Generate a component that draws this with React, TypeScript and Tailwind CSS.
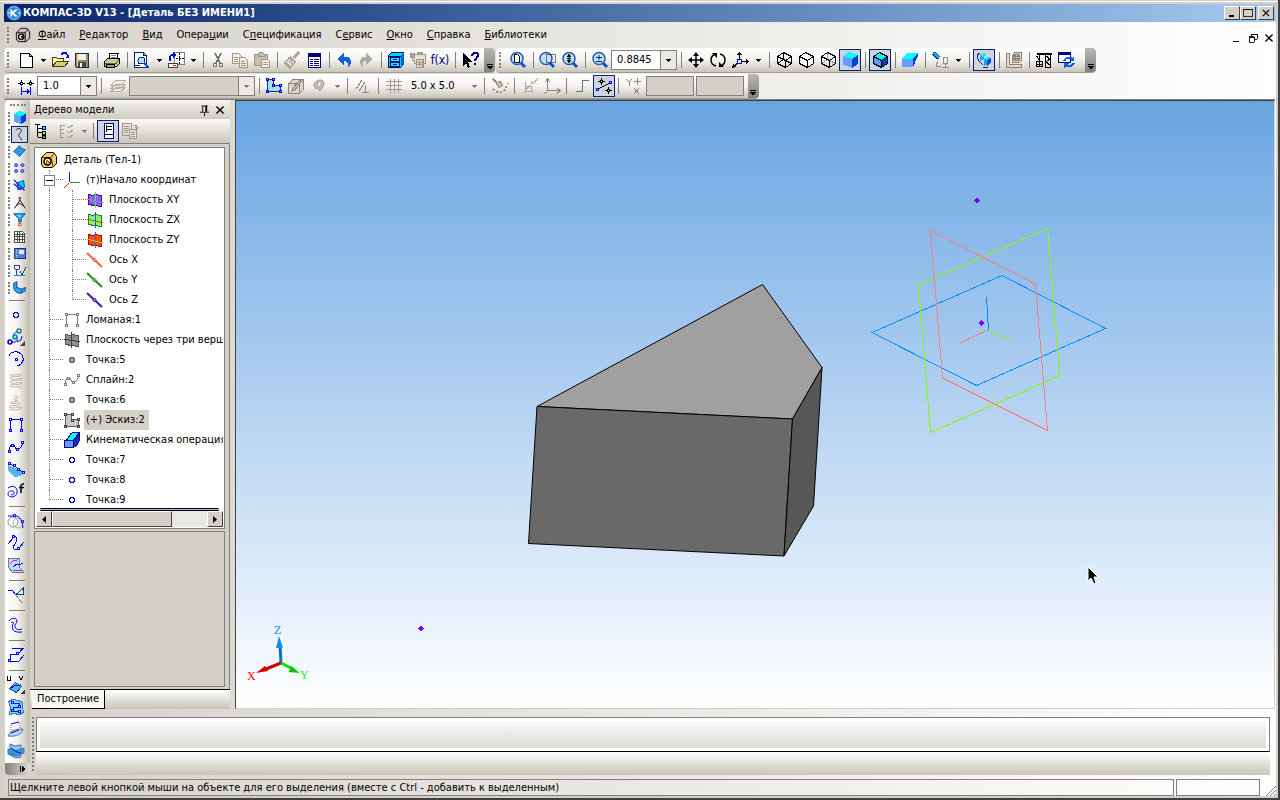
import React, { useState } from 'react';
import clsx from 'clsx';

const ICONS: Record<string, React.ReactNode> = {
  logo: (
    <g shapeRendering="auto">
      <circle cx="9" cy="9" r="8.5" fill="#2b7fd0" />
      <circle cx="9" cy="9" r="7" fill="none" stroke="#9fd0f5" strokeWidth="1" />
      <path d="M6 5v8M7 9l5-4M7 9l5 4" stroke="#fff" strokeWidth="2" fill="none" />
      <path d="M13 9h3M2 9h3" stroke="#fff" />
    </g>
  ),
  nut: (
    <g shapeRendering="auto">
      <path d="M1.5 6.5l5-5h7l3 4v7l-4 4h-9l-2-3z" fill="#c8c4bc" stroke="#000" />
      <path d="M2 6.5h9.5v10M11.5 6.5l3-4" stroke="#000" fill="none" />
      <circle cx="7" cy="11" r="3" fill="#fff" stroke="#000" strokeWidth="1.5" />
      <path d="M6 11l3-2v4z" />
    </g>
  ),
  nutGold: (
    <g shapeRendering="auto">
      <path d="M1.5 6.5l5-5h7l3 4v7l-4 4h-9l-2-3z" fill="#ffc864" stroke="#000" />
      <path d="M2 6.5h9l2 9M11 6.5l3-4" stroke="#603c00" fill="none" />
      <circle cx="7.5" cy="10.5" r="3.5" fill="#fff" stroke="#000" strokeWidth="1.5" />
      <path d="M7 9l3 3H6z" fill="#ffc864" stroke="#805000" />
    </g>
  ),
  new: <path d="M3.5 2.5h9l3 3v11h-12zM12.5 2.5v3h3" fill="#fff" stroke="#000" />,
  open: (
    <g>
      <path d="M1.5 15.5v-9h4l1 1h6v3" fill="#ffffb0" stroke="#404000" />
      <path d="M1.5 15.5l4-5h12l-4 5z" fill="#d8d070" stroke="#404000" />
      <path d="M10 4l2-2h3l2 3" fill="none" stroke="#0000ff" strokeWidth="1.5" />
      <path d="M18 3v4h-4z" fill="#0000ff" />
    </g>
  ),
  save: (
    <g>
      <path d="M2.5 2.5h13v14h-12l-1-1z" fill="#a08c50" stroke="#203050" />
      <path d="M5 3h8v6H5z" fill="#f0f0f0" />
      <path d="M5 11h8v5H5z" fill="#404858" />
      <path d="M7 12h2v4H7z" fill="#fff" />
      <path d="M4 3v12" stroke="#ffd080" />
    </g>
  ),
  print: (
    <g>
      <path d="M6 8l1-5.5h8L14 8z" fill="#fff" stroke="#000" />
      <path d="M8 4.5h5M8 6.5h5" stroke="#888" />
      <path d="M1.5 10.5l3-3h12v5l-3 3h-12z" fill="#c8c8a8" stroke="#000" />
      <path d="M2 12.5h11l3-4" stroke="#606040" fill="none" />
      <path d="M3.5 13.5h8v3h-8z" fill="#a0a078" stroke="#000" />
      <path d="M10 11.5h2" stroke="#ff0" />
    </g>
  ),
  preview: (
    <g>
      <path d="M1.5 1.5h9l3 3v12h-12zM10.5 1.5v3h3" fill="#fff" stroke="#0a246a" />
      <circle cx="8.5" cy="9.5" r="3.5" fill="#b8e0ff" stroke="#0a246a" />
      <path d="M11 12l5 5" stroke="#0a50d0" strokeWidth="2.5" />
      <path d="M2 14h5" stroke="#0a246a" />
    </g>
  ),
  pages: (
    <g>
      <path d="M7.5 1.5h10v12h-10z" fill="#fff" stroke="#808080" />
      <path d="M12.5 2v11M9 7.5h8" stroke="#000" strokeDasharray="2 1" />
      <path d="M1.5 12.5h9v4h-9z" fill="#fff" stroke="#404040" />
      <path d="M6 14.5h3" stroke="#f00" />
      <path d="M2.5 10V6l2-2h2" fill="none" stroke="#0000ff" strokeWidth="2" />
      <path d="M6 1l4 3-4 3z" fill="#0000ff" />
    </g>
  ),
  cut: (
    <g fill="none" stroke="#80786c">
      <path d="M6 2l5 10M12 2L7 12" strokeWidth="1.5" />
      <circle cx="6" cy="14" r="2" />
      <circle cx="12" cy="14" r="2" />
    </g>
  ),
  copy: (
    <g fill="#f0ede6" stroke="#a09484">
      <path d="M1.5 2.5h6l3 3v7h-9z" />
      <path d="M8.5 6.5h5l3 3v7h-8z" />
      <path d="M3 6.5h4M3 8.5h4M3 10.5h4M10 10.5h4M10 12.5h5M10 14.5h5" />
    </g>
  ),
  paste: (
    <g fill="#c8beb0" stroke="#a09484">
      <path d="M1.5 3.5h13v11h-13z" />
      <path d="M5 5V3l2-2h2l2 2v2z" />
      <path d="M8.5 8.5h6l2 2v6h-8z" fill="#f0ede6" />
      <path d="M10 11.5h4M10 13.5h5" />
    </g>
  ),
  brush: (
    <g fill="none" stroke="#b0a498">
      <path d="M16 1l-5 6" strokeWidth="3" />
      <path d="M7 6l6 5M6 7L2 12l5 5 5-6z" fill="#e4ddd0" strokeWidth="1.5" />
      <path d="M4 12l3 3M6 10l4 3" />
    </g>
  ),
  props: (
    <g>
      <path d="M3.5 3.5h12v13h-12z" fill="#fff" stroke="#000080" />
      <path d="M3 2h13v4H3z" fill="#000080" />
      <path d="M5 8.5h3M5 10.5h3M5 12.5h3M5 14.5h3M9 8.5h5M9 10.5h5M9 12.5h5M9 14.5h5" stroke="#000080" />
    </g>
  ),
  undo: <path d="M2 8l7-6v4h3c3 0 4 3 4 5s-1 4-3 5c1-3 0-6-4-6v4z" fill="#1060f0" />,
  redo: <path d="M16 8L9 2v4H7c-3 0-4 3-4 5s1 4 3 5c-1-3 0-6 3-6v4z" fill="#b0aaa4" />,
  cabinet: (
    <g>
      <path d="M1.5 4.5l3-3h12v12l-3 3h-12z" fill="#00d8e8" stroke="#000080" />
      <path d="M14 4v12l3-3V2z" fill="#0060e0" />
      <path d="M2 5h12M3.5 6.5h9v4h-9zM3.5 11.5h9v4h-9z" fill="#00ffff" stroke="#000080" />
      <path d="M6 8.5h4M6 13.5h4" stroke="#000080" />
    </g>
  ),
  scroll: (
    <g fill="#e8e2d8" stroke="#a09484">
      <path d="M5.5 3.5h11v9h-11z" />
      <path d="M1.5 2.5h4v4h-4zM8 3V1h5v2" fill="#b0a494" />
      <path d="M7.5 8.5h7v8h-7zM8 11h7M8 13h7M10 9v7M13 9v7M3 6v3h3" />
    </g>
  ),
  help: (
    <g>
      <path d="M2 2v13l3-3 2 5 2-1-2-5h4z" fill="#000" />
      <path d="M11 5c0-4 6-4 6-1s-3 3-3 6" fill="none" stroke="#000080" strokeWidth="2" />
      <path d="M13 12h2v2h-2z" fill="#000080" />
    </g>
  ),
  zoomDoc: (
    <g shapeRendering="auto">
      <circle cx="8" cy="7.5" r="6" fill="#c0e4ff" stroke="#2858a8" strokeWidth="1.5" />
      <path d="M5.5 3.5h3l2 2v6h-5z" fill="#fff" stroke="#000" />
      <path d="M12 12l4 4" stroke="#1050c0" strokeWidth="3" />
    </g>
  ),
  zoomArea: (
    <g shapeRendering="auto">
      <circle cx="7" cy="7.5" r="6" fill="#c0e4ff" stroke="#2858a8" strokeWidth="1.5" />
      <path d="M7.5 3.5h9v8h-9z" fill="none" stroke="#000" strokeDasharray="1 1" />
      <path d="M11 12l4 4" stroke="#1050c0" strokeWidth="3" />
    </g>
  ),
  zoomDyn: (
    <g shapeRendering="auto">
      <circle cx="8" cy="7.5" r="6" fill="#c0e4ff" stroke="#2858a8" strokeWidth="1.5" />
      <path d="M8 3v9M6 7.5h4" stroke="#000" />
      <path d="M5.5 6h5L8 3zM5.5 9h5L8 12z" fill="#000" />
      <path d="M12 12l4 4" stroke="#1050c0" strokeWidth="3" />
    </g>
  ),
  zoomPm: (
    <g shapeRendering="auto">
      <circle cx="8" cy="7.5" r="6" fill="#c0e4ff" stroke="#2858a8" strokeWidth="1.5" />
      <path d="M5 6.5h6M8 4v5M5 10.5h6" stroke="#0a246a" />
      <path d="M12 12l4 4" stroke="#1050c0" strokeWidth="3" />
    </g>
  ),
  move: (
    <g shapeRendering="auto">
      <path d="M9 3v12M3 9h12" stroke="#000" strokeWidth="1.5" />
      <path d="M9 1l3 4H6zM9 17l3-4H6zM1 9l4-3v6zM17 9l-4-3v6z" />
    </g>
  ),
  rotate: (
    <g shapeRendering="auto">
      <path d="M7 15C3 14 2 11 2 9c0-3 2-5 4-6M11 3c4 1 5 4 5 6 0 3-2 5-4 6" fill="none" stroke="#000" strokeWidth="1.5" />
      <path d="M3 2h5v5zM15 16h-5v-5z" />
    </g>
  ),
  axes: (
    <g>
      <path d="M8.5 2v9M8 10.5h9M8 11l-6 5" stroke="#000" fill="none" />
      <path d="M8.5 1l2.5 3H6zM18 10.5l-3-2.5v5zM1 17l1-4 3 3z" />
      <path d="M6.5 8.5h4v4h-4z" fill="#fff" stroke="#0000ff" />
    </g>
  ),
  cubeWire: <path d="M2.5 5.5l6-4 8 4v7l-6 4-8-4zM2.5 5.5l8 4v7M10.5 9.5l6-4M8.5 1.5v7l-6 4M8.5 8.5l8 4" fill="none" stroke="#000" />,
  cubeHidden: <path d="M2.5 5.5l6-4 8 4v7l-6 4-8-4zM2.5 5.5l8 4v7M10.5 9.5l6-4" fill="#fff" stroke="#000" />,
  cubeThin: (
    <g fill="none" stroke="#000">
      <path d="M8.5 1.5v7l-6 4M8.5 8.5l8 4" stroke="#a0a0a0" />
      <path d="M2.5 5.5l6-4 8 4v7l-6 4-8-4zM2.5 5.5l8 4v7M10.5 9.5l6-4" />
    </g>
  ),
  cubeBlue: (
    <g>
      <path d="M2 5l6-4 9 3-6 5z" fill="#00ffff" />
      <path d="M2 5l9 3v9l-9-3z" fill="#60a0ff" />
      <path d="M11 8l6-4v9l-6 4z" fill="#0040e0" />
    </g>
  ),
  cubeEdge: (
    <g stroke="#000">
      <path d="M2.5 5.5l6-4 8 4-6 4z" fill="#00ffff" />
      <path d="M2.5 5.5l8 4v7l-8-4z" fill="#60a0ff" />
      <path d="M10.5 9.5l6-4v7l-6 4z" fill="#0040c0" />
    </g>
  ),
  wedge: (
    <g>
      <path d="M1 8l5-6h12l-6 6z" fill="#00ffff" />
      <path d="M1 8h11v8H1z" fill="#60a0ff" />
      <path d="M12 8l5-6v3l-5 11z" fill="#0040e0" />
    </g>
  ),
  light: (
    <g>
      <path d="M2 2l6 5" stroke="#0030a0" strokeWidth="4" />
      <path d="M3 2l5 5" stroke="#00c0ff" strokeWidth="2" />
      <path d="M12.5 6.5h4v6h-4zM14.5 12v5M11 16.5h7M7 10l-2 5M5 16l5-1" fill="none" stroke="#909090" />
    </g>
  ),
  section: (
    <g>
      <path d="M5 4l4-2v6l-4 2zM9 8l6-2v6l-6 3z" fill="#20a0f0" />
      <path d="M5 4l4-2 3 2-4 2zM9 8l3-2 4 1-4 2z" fill="#00f0ff" />
      <path d="M12 9l4-2v5l-4 3z" fill="#0050d0" />
      <path d="M2 4c0 4 2 7 6 10M8 16h5M2 4l3-2" fill="none" stroke="#0a246a" />
    </g>
  ),
  caliper: (
    <g fill="none" stroke="#908478">
      <path d="M1.5 2.5h3v11h12v3h-15z" fill="#e0d8cc" />
      <path d="M7.5 4.5l2-3h7v8l-2 2h-7z" fill="#d8cec0" />
      <circle cx="11.5" cy="6.5" r="3" strokeWidth="1.5" />
      <circle cx="11.5" cy="6.5" r="1" />
    </g>
  ),
  tower: (
    <g>
      <path d="M2 2.5h15" stroke="#000" strokeWidth="2" />
      <path d="M4.5 2v8M4.5 9l-3-4" stroke="#000" fill="none" />
      <path d="M1.5 10.5h6v5h-6zM4.5 10v6M1 13h7" fill="none" stroke="#000" />
      <path d="M10.5 3v13.5h5V3M11 5l4 3-4 3 4 3" fill="none" stroke="#000" />
    </g>
  ),
  refresh: (
    <g>
      <path d="M1.5 2.5h12v9h-12z" fill="#fff" stroke="#000080" />
      <path d="M1 1h13v3H1z" fill="#000080" />
      <path d="M7 10c2-4 6-4 8-2M17 12c-2 4-6 4-8 2" fill="none" stroke="#1060f0" strokeWidth="2" />
      <path d="M17 5v5h-5zM7 17v-5h5z" fill="#1060f0" />
    </g>
  ),
  step: (
    <g>
      <path d="M4.5 3v6M1 6h7M13.5 3v6M10 6h7" stroke="#000" />
      <path d="M3.5 5.5h2v2h-2zM12.5 5.5h2v2h-2z" fill="#fff" stroke="#000" />
      <path d="M4.5 10v8M13.5 10v8M5 14.5h8" stroke="#0000ff" />
      <path d="M13 14.5l-3-2.5v5z" fill="#0000ff" />
    </g>
  ),
  layers: <path d="M1.5 14.5l5-4h10l-5 4zM1.5 11.5l5-4h10l-5 4zM1.5 8.5l5-5h10l-5 5z" fill="#eee8e0" stroke="#b8aca0" />,
  sketch: (
    <g>
      <path d="M2.5 2.5h6v6h7v6h-13z" fill="#a8dcec" stroke="#0a3a9a" />
      <path d="M1 1h3v3H1zM7 1h3v3H7zM7 7h3v3H7zM14 7h3v3h-3zM14 13h3v3h-3zM1 13h3v3H1z" fill="#0000c0" />
      <path d="M2 2h1v1H2zM8 2h1v1H8zM8 8h1v1H8zM15 8h1v1h-1zM15 14h1v1h-1zM2 14h1v1H2z" fill="#00e0ff" />
    </g>
  ),
  sketchBox: (
    <g fill="#ddd6cc" stroke="#908478">
      <path d="M1.5 6.5l4-4h11v10l-4 4h-11zM1.5 6.5h11v10M12.5 6.5l4-4" />
      <path d="M13 3L6 11l-1 3 3-1 6-8z" fill="#c0b8ac" />
    </g>
  ),
  magnet: (
    <g shapeRendering="auto" fill="none">
      <path d="M5 12L3 9c-1-4 6-8 9-5 2 3 0 6-3 10l-2-2c3-4 4-6 3-7S5 6 7 9l0 1z" fill="#c8c0b8" stroke="#a09890" />
    </g>
  ),
  parallel: <path d="M3 12L9 3M6 14l6-9M9 15.5h7M12.5 8v7" fill="none" stroke="#908880" />,
  grid: <path d="M5.5 2v14M9.5 2v14M13.5 2v14M1 4.5h16M1 8.5h16M1 12.5h16" stroke="#a09890" />,
  rough: (
    <g stroke="#a09080">
      <path d="M2 2l4 4" strokeWidth="2" />
      <path d="M5 6l4-2 3 4-4 3z" fill="#c8bcb0" />
      <path d="M2 12l6 4 6-3 3-7" fill="none" strokeWidth="2" strokeDasharray="2 2" />
    </g>
  ),
  snap: <path d="M4.5 5v9h8M4 14l6-7M2 17l3-3M10 4l2 3 5-6M5 9h5v5" fill="none" stroke="#b0a8a0" />,
  ortho: <path d="M4.5 3v10.5h12M4 14l-3 3M2 5l2.5-3L7 5M14 11l3 2.5-3 3" fill="none" stroke="#908478" />,
  stair: <path d="M3 14.5h6.5v-11H16" fill="none" stroke="#707070" />,
  trace: (
    <g>
      <path d="M3 12l12-6" stroke="#000" />
      <path d="M6.5 1v7M3 4.5h7M13.5 10v7M10 13.5h7" stroke="#000" />
      <path d="M5.5 3.5h2v2h-2zM12.5 12.5h2v2h-2z" fill="#fff" stroke="#000" />
      <path d="M1.5 11.5h2v2h-2zM14.5 4.5h2v2h-2z" fill="#fff" stroke="#00f" />
    </g>
  ),
  xy: <path d="M1 2l3 3 3-3M4 5v4M12.5 1v7M9 4.5h7M9 11l5 6M14 11l-5 6" fill="none" stroke="#908880" />,
  // left bar, group icons
  curve: <path d="M5 4c1-3 6-3 6 0 0 4-5 5-2 8 2 2 3 3 2 4" fill="none" stroke="#000" shapeRendering="auto" />,
  surf: <path d="M2 9l7-7 2 3 5 2-7 8-3-3z" fill="#3098e8" stroke="#0050a0" shapeRendering="auto" />,
  dots: (
    <g fill="#80a0ff" stroke="#1020e0" shapeRendering="auto">
      <circle cx="5" cy="5" r="1.8" />
      <circle cx="12.5" cy="5" r="1.8" />
      <circle cx="5" cy="12" r="1.8" />
      <circle cx="12.5" cy="12" r="1.8" />
    </g>
  ),
  axisSurf: (
    <g shapeRendering="auto">
      <path d="M6 6l8-3 1 8-8 3z" fill="#00d8f0" stroke="#0020d0" />
      <path d="M2 2l13 13M2 7l9 7" stroke="#0020d0" strokeWidth="1.5" />
    </g>
  ),
  compass: <path d="M8 3.5h3M9.5 3v3L3 16M9.5 6L16 16M5 13l4-3 5 3" fill="none" stroke="#000" shapeRendering="auto" />,
  filter: (
    <g shapeRendering="auto">
      <path d="M2 2h14l-5 6v4H8V8z" fill="#20a0f0" stroke="#0050a0" />
      <path d="M6 4h4v3z" fill="#b0f0ff" />
      <path d="M8 13.5h3v3H8z" fill="#fff" stroke="#e02000" />
    </g>
  ),
  sheet: <path d="M3.5 2.5h8l4 4v10h-12zM6.5 3v13M9.5 3v13M12.5 5v11M4 6.5h11M4 9.5h11M4 12.5h11" fill="#fff" stroke="#303030" />,
  book: (
    <g>
      <path d="M3.5 2.5h13v13h-13z" fill="#5080e0" stroke="#0a246a" />
      <path d="M8 5h6v5H8z" fill="#e0f0ff" />
      <path d="M5 3v12" stroke="#fff" strokeDasharray="1 1" />
    </g>
  ),
  base: (
    <g fill="none">
      <path d="M3.5 2.5h5v5h-5zM5.5 8v6M10 10l2 4 5-9" stroke="#0a246a" />
      <path d="M2 15h14" stroke="#0090e0" strokeWidth="2" />
    </g>
  ),
  angle: <path d="M2 4l4-2v7l6 2 4-2v4l-5 3c-5 0-9-3-9-7zM6 9l-2 1M12 11l-1 4" fill="#20b0f0" stroke="#00309a" shapeRendering="auto" />,
  // construction commands
  point: (
    <g>
      <path d="M7 6h4v1h1v4h-1v1H7v-1H6V7h1z" fill="#0000ff" />
      <path d="M8 7h2v1h1v2h-1v1H8v-1H7V8h1z" fill="#ffff60" />
    </g>
  ),
  pointGray: (
    <g>
      <path d="M7 6h4v1h1v4h-1v1H7v-1H6V7h1z" fill="#707070" />
      <path d="M8 8h2v2H8z" fill="#d0d0d0" />
    </g>
  ),
  pointCurve: (
    <g shapeRendering="auto">
      <path d="M3 14c7 1 9-2 6-5S6 5 12 3M15 8l-1 4-4 2" fill="none" stroke="#0000ff" />
      <circle cx="12" cy="3" r="2" fill="#ff0" stroke="#0080c0" strokeWidth="1.5" />
      <circle cx="8" cy="9" r="2" fill="#8f8" stroke="#0080c0" strokeWidth="1.5" />
      <circle cx="3" cy="14" r="2" fill="#ff0" stroke="#0000ff" strokeWidth="1.5" />
      <path d="M18 13v5h-5z" fill="#404040" />
    </g>
  ),
  arc: (
    <g fill="none" stroke="#0000ff">
      <path d="M2 6c2-5 9-6 13-1 3 5 0 10-5 11" />
      <path d="M8.5 8.5h2v2h-2z" />
    </g>
  ),
  spring: (
    <g fill="none" stroke="#c0b4ac" shapeRendering="auto">
      <path d="M2 2c3 3 9-1 13 1-3 3-11 0-12 3 3 3 9-1 12 1-3 3-11 0-12 3 3 3 9-1 12 1-3 3-11 0-12 3 3 2 9-1 12 2" />
    </g>
  ),
  springCone: (
    <g fill="none" stroke="#c0b4ac" shapeRendering="auto">
      <path d="M7 2c3-1 5 1 3 2-4 0-5 3 1 2-1 3-8 1-7 3 3 2 7-2 9 1-2 3-10 0-11 3 3 3 10-2 13 1-4 3-10 1-13 2" />
    </g>
  ),
  polyline: (
    <g fill="#fff" stroke="#0000ff">
      <path d="M3.5 15V3.5h11V15" fill="none" />
      <path d="M2.5 2.5h2v2h-2zM13.5 2.5h2v2h-2zM2.5 13.5h2v2h-2zM13.5 13.5h2v2h-2z" />
    </g>
  ),
  polylineGray: (
    <g fill="#fff" stroke="#808080">
      <path d="M3.5 15V3.5h11V15" fill="none" />
      <path d="M2.5 2.5h2v2h-2zM13.5 2.5h2v2h-2zM2.5 13.5h2v2h-2zM13.5 13.5h2v2h-2z" />
    </g>
  ),
  spline: (
    <g fill="#fff" stroke="#0000ff">
      <path d="M2 14c1-8 4-9 6-5s6 3 8-5" fill="none" />
      <path d="M1.5 12.5h2v2h-2zM4.5 6.5h2v2h-2zM9.5 10.5h2v2h-2zM14.5 3.5h2v2h-2z" />
    </g>
  ),
  splineGray: (
    <g fill="#fff" stroke="#808080">
      <path d="M2 14c1-8 4-9 6-5s6 3 8-5" fill="none" />
      <path d="M1.5 12.5h2v2h-2zM4.5 6.5h2v2h-2zM9.5 10.5h2v2h-2zM14.5 3.5h2v2h-2z" />
    </g>
  ),
  splineSurf: (
    <g fill="#fff" stroke="#0000ff">
      <path d="M1 5l16 7-4 4-5 1-7-6z" fill="#50b8f0" stroke="none" />
      <path d="M2 3l5 3 5 3 4 4" fill="none" />
      <path d="M1.5 2.5h2v2h-2zM6.5 4.5h2v2h-2zM10.5 8.5h2v2h-2zM15.5 11.5h2v2h-2z" />
    </g>
  ),
  spiral: (
    <g fill="none" shapeRendering="auto">
      <path d="M1 6c6-4 10 0 9 5s-9 5-9 1 6-4 6-1-3 2-3 1" stroke="#0000ff" />
      <path d="M14 11V4c0-2 1-2 3-2M12 5.5h5" stroke="#000" strokeWidth="1.5" />
    </g>
  ),
  fillet: (
    <g fill="none" shapeRendering="auto">
      <circle cx="6" cy="10" r="5" stroke="#909090" />
      <circle cx="11" cy="11" r="5" stroke="#b0b0b0" />
      <path d="M1 4h6c4-1 8 2 9 12" stroke="#0000ff" />
      <path d="M6.5 2.5h2v2h-2zM14.5 8.5h2v2h-2z" stroke="#0000ff" fill="#fff" />
    </g>
  ),
  connect: (
    <g fill="none" stroke="#0000ff">
      <path d="M1 10l5-6c4-4 5 2 2 6s-1 8 4 4l5-6" />
      <path d="M5.5 1.5h2v2h-2zM10.5 13.5h2v2h-2z" fill="#fff" />
    </g>
  ),
  project: (
    <g fill="none">
      <path d="M1.5 2.5h11v9l4 4v1h-11l-4-5z" fill="#b0e4f4" stroke="#708088" />
      <path d="M3 8l4-4 2 1 2-2M6 14h9" stroke="#ff00ff" />
      <path d="M6 11l4-3 2 1 4-2" stroke="#0000ff" />
    </g>
  ),
  trim: (
    <g fill="none">
      <path d="M1 4h4l4 5" stroke="#0000ff" />
      <path d="M9 9l5 7h2" stroke="#909090" />
      <path d="M9 8.5l7-6v6z" stroke="#0a4080" fill="#e0f8ff" />
    </g>
  ),
  offset: (
    <g fill="none" stroke="#0000e0" shapeRendering="auto">
      <path d="M2 5c3-4 8-3 8 0s-3 3-2 6 4 3 7 2" />
      <path d="M4 7c2-2 3-1 2 1-2 5 0 9 9 8" />
    </g>
  ),
  bound: (
    <g fill="none" stroke="#0000ff">
      <path d="M5 2.5h11L11 8H3v7h9l5-6" />
      <path d="M9.5 6.5h2v2h-2zM1.5 13.5h2v2h-2z" fill="#fff" />
    </g>
  ),
  uv: (
    <g>
      <path d="M2.5 12.5l6-6 6 4-5 6z" fill="#60b0f0" stroke="#0050a0" />
      <path d="M4 12l5-3 3 1 2-2" stroke="#0000ff" fill="none" />
      <path d="M0.5 0v4h3V0M12 0l2 4 2-4" fill="none" stroke="#000" />
      <path d="M18 13v5h-5z" fill="#404040" />
    </g>
  ),
  patch: (
    <g fill="#fff" stroke="#0000ff">
      <path d="M1.5 3.5l4-2 6 1 4 2v5l1 5-4 2-6-1-4 1 1-7z" fill="#80d8f8" stroke="#3080a0" />
      <path d="M6 5h6v4H6v4h6" fill="none" />
      <path d="M4.5 3.5h2v2h-2zM11.5 7.5h2v2h-2zM4.5 11.5h2v2h-2zM11.5 12.5h2v2h-2z" />
    </g>
  ),
  ruled: (
    <g shapeRendering="auto">
      <path d="M1 16c2-5 7-7 15-7-1 5-6 8-15 7z" fill="#b0d8ff" stroke="#607080" />
      <path d="M4 4l8-2M4 13l8-3" stroke="#0000ff" />
      <path d="M4 5v7M13 3v6" stroke="#808080" strokeDasharray="1 1" />
    </g>
  ),
  cross: (
    <g shapeRendering="auto">
      <path d="M3 2l5 2 6-1v12l-5 1-6-3z" fill="#80ccf4" stroke="#507090" />
      <path d="M1 7l7 2 9-3v5l-7 3-9-2z" fill="#3098e8" stroke="#507090" />
      <path d="M4 6l6 4 4 1" stroke="#0000ff" fill="none" />
    </g>
  ),
  // tree
  origin: (
    <g fill="none">
      <path d="M6.5 1v10" stroke="#2020d0" />
      <path d="M7 11.5h10" stroke="#209040" />
      <path d="M6 12l-5 5" stroke="#e02020" />
    </g>
  ),
  planeXY: (
    <g>
      <path d="M2.5 3.5l5 1 1-1 7 1v11l-7-1-6-1z" fill="#7070ff" stroke="#5000a0" />
      <path d="M9 1v16" stroke="#60e060" />
      <path d="M1 8l16 4" stroke="#ff6060" />
    </g>
  ),
  planeZX: (
    <g>
      <path d="M2.5 3.5l5 1 1-1 7 1v11l-7-1-6-1z" fill="#70ff70" stroke="#208020" />
      <path d="M9 1v16" stroke="#4040ff" />
      <path d="M1 8l16 4" stroke="#ff4000" />
    </g>
  ),
  planeZY: (
    <g>
      <path d="M2.5 3.5l5 1 1-1 7 1v11l-7-1-6-1z" fill="#ff5000" stroke="#c00000" />
      <path d="M9 1v16" stroke="#4060ff" />
      <path d="M1 8l16 4" stroke="#80e060" />
    </g>
  ),
  planeGray: (
    <g>
      <path d="M2.5 3.5l5 1 1-1 7 1v11l-7-1-6-1z" fill="#909090" stroke="#505050" />
      <path d="M8.5 1v16M1 8l16 3" stroke="#404040" />
    </g>
  ),
  axisX: (
    <g shapeRendering="auto" stroke="#ff6030">
      <path d="M1 2l15 14" strokeWidth="2" />
      <circle cx="8.5" cy="9" r="1.5" fill="#ffb090" />
    </g>
  ),
  axisY: (
    <g shapeRendering="auto" stroke="#209020">
      <path d="M1 2l15 14" strokeWidth="2" />
      <circle cx="8.5" cy="9" r="1.5" fill="#90d090" />
    </g>
  ),
  axisZ: (
    <g shapeRendering="auto" stroke="#5010b0">
      <path d="M1 2l15 14" strokeWidth="2" />
      <circle cx="8.5" cy="9" r="1.5" fill="#a080e0" />
    </g>
  ),
  sketchGray: (
    <g>
      <path d="M2.5 3.5h6v5h7v7h-13z" fill="#c8c8c8" stroke="#606060" />
      <path d="M1 2h3v3H1zM8 2h3v3H8zM8 8h3v3H8zM14 7h3v3h-3zM14 14h3v3h-3zM1 14h3v3H1z" fill="#404040" />
      <path d="M2 3h1v1H2zM9 3h1v1H9zM9 9h1v1H9zM15 8h1v1h-1zM15 15h1v1h-1zM2 15h1v1H2z" fill="#c0c0c0" />
    </g>
  ),
  sweep: (
    <g stroke="#000080">
      <path d="M1.5 9.5c5 0 4-7 8-8h7c-3 1-3 7-7 8z" fill="#00ffff" />
      <path d="M10 10c4-1 4-7 6.5-8v7c-1 4-4 7-6.5 7z" fill="#0030e0" />
      <path d="M1.5 9.5h9v7h-9z" fill="#60a0ff" />
    </g>
  ),
  treeView: (
    <g fill="none" stroke="#000">
      <path d="M3.5 2v13M4 6h4M4 10.5h4M4 15h4M1 2.5h5" />
      <path d="M8.5 4.5h3v3h-3z" fill="#0ff" stroke="#000080" />
      <path d="M8.5 9.5h3v3h-3z" fill="#ff0" />
      <path d="M8.5 13.5h3v3h-3z" fill="#0c0" />
    </g>
  ),
  treeList: <path d="M2.5 3v12M2 3.5h5M2 7.5h4M2 11.5h4M2 15.5h4M9 4l2 2 4-3M9 9l2 2 4-3M9 14l2 2 4-3" fill="none" stroke="#a09890" />,
  docTree: (
    <g fill="none" stroke="#000080">
      <path d="M5.5 1.5h9v15h-9z" fill="#fff" />
      <path d="M7.5 3v7M8 4.5h5M8 7.5h5" stroke="#000" />
      <path d="M6 12.5h8" />
    </g>
  ),
  docCopy: (
    <g fill="#e4ded4" stroke="#a09484">
      <path d="M1.5 1.5h9v12h-9z" />
      <path d="M8.5 7.5h7v9h-7zM12 3c4 0 4 1 4 3M14 5l2 2 2-2" />
      <path d="M3 4.5h5M3 6.5h5M3 8.5h4M3 10.5h4M10 10.5h4M10 12.5h4M10 14.5h4" />
    </g>
  ),
  pin: (
    <g fill="none" stroke="#000" shapeRendering="auto">
      <path d="M6 4.5h7M7.5 5v6M4.5 11.5h10M9.5 12v4" />
      <path d="M11.5 4v7" strokeWidth="2" />
    </g>
  ),
  close: <path d="M5 5l8 8M13 5l-8 8" stroke="#000" strokeWidth="1.5" shapeRendering="auto" />,
  minimize: <path d="M5 13h6" stroke="#000" strokeWidth="2" />,
  maximize: <path d="M3.5 4h11v10h-11zM3 5h12" fill="none" stroke="#000" />,
  restore: <path d="M7.5 7V4.5h6v6H11M7 5h7M4.5 7.5h6v6h-6zM4 8h7" fill="none" stroke="#000" />,
};

function Icon({ name, className = 'w-[18px] h-[18px]' }: { name: string; className?: string }) {
  return (
    <svg viewBox="0 0 18 18" className={clsx('shrink-0 block', className)} shapeRendering="crispEdges" aria-hidden="true">
      {ICONS[name]}
    </svg>
  );
}

function Tool({ icon, label, active }: { icon: string; label: string; active?: boolean }) {
  return (
    <button
      type="button"
      aria-label={label}
      className={clsx('w-[22px] h-[22px] shrink-0 flex items-center justify-center', active && 'border border-[#0a246a] bg-[#ced3e0]')}
    >
      {icon === 'fx' ? <span className="text-[#000080] text-xs">f(x)</span> : <Icon name={icon} />}
    </button>
  );
}

function Arrow({ dim, wide }: { dim?: boolean; wide?: boolean }) {
  return (
    <button type="button" aria-label="Ещё" className={clsx('h-[22px] shrink-0 flex items-center justify-center', wide ? 'w-[14px]' : 'w-3')}>
      <svg viewBox="0 0 5 3" className="w-[5px] h-[3px]" shapeRendering="crispEdges">
        <path d="M0 0h5L2.5 3z" fill={dim ? '#808080' : '#000'} />
      </svg>
    </button>
  );
}

const Sep = () => (
  <span className="w-2 shrink-0 flex justify-center">
    <span className="w-px h-4 bg-[#808080]" />
  </span>
);

const HSep = () => (
  <span className="h-2 w-full shrink-0 flex flex-col justify-center">
    <span className="h-px w-4 ml-1 bg-[#808080]" />
  </span>
);

const Grip = () => (
  <span className="w-[11px] shrink-0 flex pl-[3px]">
    <span className="h-4 border-l-2 border-dotted border-[#808080]" />
  </span>
);

function EndCap() {
  return (
    <span className="w-[11px] h-full shrink-0 rounded-r-sm bg-linear-to-b from-[#b8b8b4] to-[#808080] flex flex-col items-center justify-end pb-0.5">
      <svg viewBox="0 0 6 6" className="w-1.5 h-1.5" shapeRendering="crispEdges">
        <path d="M0 0.5h6" stroke="#000" />
        <path d="M0 2h6L3 6z" />
      </svg>
    </span>
  );
}

function Toolbar({ children, label }: { children: React.ReactNode; label: string }) {
  return (
    <div role="toolbar" aria-label={label} className="h-[25px] shrink-0 flex items-center rounded-sm bg-linear-to-b from-white via-[#f4f3f0] to-[#c8c4b8] border-b border-[#a09c94]">
      {children}
    </div>
  );
}

function Combo({ value, label, className, disabled }: { value: string; label: string; className: string; disabled?: boolean }) {
  return (
    <div className={clsx('h-5 flex shrink-0 border border-[#808080]', disabled ? 'bg-[#d4d0c8]' : 'bg-white', className)}>
      <input aria-label={label} defaultValue={value} disabled={disabled} className="flex-1 min-w-0 pl-[5px] bg-transparent outline-none" />
      <button type="button" aria-label={label} disabled={disabled} className="w-4 border-l border-[#808080] bg-[#ece9e4] flex items-center justify-center">
        <svg viewBox="0 0 5 3" className="w-[5px] h-[3px]" shapeRendering="crispEdges">
          <path d="M0 0h5L2.5 3z" fill={disabled ? '#808080' : '#000'} />
        </svg>
      </button>
    </div>
  );
}

const MENU = [
  ['', 'Ф', 'айл'],
  ['', 'Р', 'едактор'],
  ['', 'В', 'ид'],
  ['Опера', 'ц', 'ии'],
  ['С', 'п', 'ецификация'],
  ['С', 'е', 'рвис'],
  ['', 'О', 'кно'],
  ['', 'С', 'правка'],
  ['', 'Б', 'иблиотеки'],
];

const GROUPS = [
  ['cubeBlue', 'Редактирование детали'],
  ['curve', 'Пространственные кривые'],
  ['surf', 'Поверхности'],
  ['dots', 'Массивы'],
  ['axisSurf', 'Вспомогательная геометрия'],
  ['compass', 'Измерения'],
  ['filter', 'Фильтры'],
  ['sheet', 'Спецификация'],
  ['book', 'Отчеты'],
  ['base', 'Элементы оформления'],
  ['angle', 'Листовое тело'],
];

const COMMANDS = [
  'point', 'pointCurve', 'arc', 'spring', 'springCone', 'polyline', 'spline', 'splineSurf', 'spiral', '-',
  'fillet', 'connect', 'project', '-', 'trim', '-', 'offset', '-', 'bound', '-', 'uv', 'patch', 'ruled', 'cross',
];

interface TreeItem {
  icon: string;
  text: string;
  level: 1 | 2;
  last?: boolean;
  open?: boolean;
}

const TREE: TreeItem[] = [
  { icon: 'origin', text: '(т)Начало координат', level: 1, open: true },
  { icon: 'planeXY', text: 'Плоскость XY', level: 2 },
  { icon: 'planeZX', text: 'Плоскость ZX', level: 2 },
  { icon: 'planeZY', text: 'Плоскость ZY', level: 2 },
  { icon: 'axisX', text: 'Ось X', level: 2 },
  { icon: 'axisY', text: 'Ось Y', level: 2 },
  { icon: 'axisZ', text: 'Ось Z', level: 2, last: true },
  { icon: 'polylineGray', text: 'Ломаная:1', level: 1 },
  { icon: 'planeGray', text: 'Плоскость через три вершины', level: 1 },
  { icon: 'pointGray', text: 'Точка:5', level: 1 },
  { icon: 'splineGray', text: 'Сплайн:2', level: 1 },
  { icon: 'pointGray', text: 'Точка:6', level: 1 },
  { icon: 'sketchGray', text: '(+) Эскиз:2', level: 1 },
  { icon: 'sweep', text: 'Кинематическая операция:1', level: 1 },
  { icon: 'point', text: 'Точка:7', level: 1 },
  { icon: 'point', text: 'Точка:8', level: 1 },
  { icon: 'point', text: 'Точка:9', level: 1, last: true },
];

function Guide({ line = true, last }: { line?: boolean; last?: boolean }) {
  return (
    <span className="w-[23px] h-5 shrink-0 flex">
      <span className={clsx('w-3.5 border-l border-dotted border-[#808080]', last ? 'h-2.5' : 'h-5')}>
        {line && <span className="block h-2.5 border-b border-dotted border-[#808080]" />}
      </span>
    </span>
  );
}

function TreeRow({ item, selected, onSelect }: { item: TreeItem; selected: boolean; onSelect: () => void }) {
  return (
    <li className="h-5 flex items-center pl-[13px]">
      {item.level === 2 && <Guide line={false} />}
      <span className="relative w-3.5 h-5 shrink-0">
        <Guide last={item.last} />
        {item.open && (
          <button type="button" aria-label="Свернуть" className="absolute -left-[5px] top-[5px] w-[11px] h-[11px] border border-[#808080] bg-white flex items-center justify-center">
            <span className="w-[7px] h-px bg-black" />
          </button>
        )}
      </span>
      <Icon name={item.icon} />
      <button type="button" onClick={onSelect} className={clsx('ml-[3px] px-0.5 h-5 shrink-0 whitespace-nowrap', selected && 'bg-[#d4d0c8] pr-1')}>
        {item.text}
      </button>
    </li>
  );
}

function ModelTree() {
  const [selected, setSelected] = useState(12);
  return (
    <aside className="w-[200px] shrink-0 flex flex-col bg-[#d4d0c8]">
      <div className="h-[19px] shrink-0 flex items-center pl-1 pr-0.5 bg-linear-to-b from-[#f4f3f0] to-[#d0ccc2]">
        <h2 className="flex-1">Дерево модели</h2>
        <button type="button" aria-label="Закрепить"><Icon name="pin" className="w-4 h-4" /></button>
        <button type="button" aria-label="Закрыть"><Icon name="close" className="w-4 h-4" /></button>
      </div>
      <div className="h-[25px] shrink-0 flex items-center pl-0.5 bg-linear-to-b from-[#fafaf8] to-[#cac6bc] border-b border-[#808080]">
        <Tool icon="treeView" label="Отображение структуры" />
        <span className="w-0.5" />
        <Tool icon="treeList" label="Состав дерева" />
        <Arrow dim />
        <span className="w-px h-4 mx-[3px] bg-[#808080]" />
        <Tool icon="docTree" label="Дополнительное окно" active />
        <Tool icon="docCopy" label="Отношения" />
      </div>
      <div className="flex-1 min-h-0 flex flex-col px-1 pt-[3px] pb-0.5 gap-0.5 border-r border-[#808080]">
        <div className="flex flex-col shrink-0 border border-[#808080] p-px pt-0.5 bg-white">
          <ul className="overflow-hidden">
            <li className="h-5 flex items-center pl-1">
              <Icon name="nutGold" />
              <span className="pl-1.5">Деталь (Тел-1)</span>
            </li>
            {TREE.map((item, i) => (
              <TreeRow key={i} item={item} selected={selected === i} onSelect={() => setSelected(i)} />
            ))}
          </ul>
          <span className="h-[3px] -mt-0.5 mx-1 rounded-sm bg-[#b0b8e0] border-y border-black" />
          <div className="h-4 flex bg-[#eae8e4]">
            <button type="button" aria-label="Влево" className="w-4 bg-[#d4d0c8] border border-white border-r-[#404040] border-b-[#404040] flex items-center justify-center">
              <svg viewBox="0 0 4 7" className="w-1 h-[7px]"><path d="M4 0v7L0 3.5z" /></svg>
            </button>
            <span className="w-[64%] bg-[#d4d0c8] border border-white border-r-[#404040] border-b-[#404040]" />
            <span className="flex-1" />
            <button type="button" aria-label="Вправо" className="w-4 bg-[#d4d0c8] border border-white border-r-[#404040] border-b-[#404040] flex items-center justify-center">
              <svg viewBox="0 0 4 7" className="w-1 h-[7px]"><path d="M0 0v7l4-3.5z" /></svg>
            </button>
          </div>
        </div>
        <div className="flex-1 border border-[#808080]" />
      </div>
      <div className="h-5 shrink-0 flex border-t border-black bg-linear-to-b from-white to-[#c8c4b8]">
        <button type="button" className="ml-0.5 h-[19px] px-[5px] bg-[#f8f7f2] border-r border-b border-black">Построение</button>
      </div>
    </aside>
  );
}

function Viewport() {
  return (
    <main className="flex-1 min-w-0 border border-[#d4d0c8] border-t-[#404040] border-l-[#404040] bg-linear-to-b from-[#68a4e1] to-white overflow-hidden">
      <svg className="block w-full h-full" fill="none">
        <g transform="translate(-236 -101)">
          <g stroke="#000" strokeLinejoin="round">
            <path d="M537 406.5L762.5 284.5L822 367.5L792.5 419z" fill="#a0a0a0" />
            <path d="M537 406.5L792.5 419L784 556L528.5 543.5z" fill="#696969" />
            <path d="M792.5 419L822 367.5L813.5 506L784 556z" fill="#575757" />
          </g>
          <g shapeRendering="crispEdges">
            <path d="M872 332.5L1002 275.5L1105.5 328.500L976.5 385.5z" stroke="#0090ff" />
            <path d="M918.5 285L1047.5 228.5L1060 375.5L930.5 432.5z" stroke="#80ff00" />
            <path d="M930.5 230.5L1035.5 284L1047.5 430.5L942.5 378z" stroke="#ff8080" />
            <path d="M988.5 330L986.5 297" stroke="#0090ff" />
            <path d="M988 330L960 343" stroke="#ff8080" />
            <path d="M988 330L1012 342" stroke="#80ff00" />
            <path d="M977 197.5l3 3-3 3-3-3zM981 320l3 3-3 3-3-3zM420.5 625.5l3 3-3 3-3-3z" fill="#7800ff" />
          </g>
          <path d="M281 663L280 645" stroke="#0870c0" strokeWidth="3" />
          <path d="M279 636l4 12h-7z" fill="#0890f0" />
          <path d="M281 663l-15 6" stroke="#d00000" strokeWidth="3" />
          <path d="M256 673l9-7 3 5z" fill="#d80000" />
          <path d="M281 663l10 5" stroke="#00e000" strokeWidth="3" />
          <path d="M299.5 673l-11-1 3-6z" fill="#00c800" />
          <g fontFamily="'Liberation Serif', serif" fontSize="12">
            <text x="274" y="634" fill="#0090ff">Z</text>
            <text x="247" y="680" fill="#ff0000">X</text>
            <text x="300" y="679" fill="#00ff00">Y</text>
          </g>
          <path d="M1088 567v14l3-3 3 6 2-1-2-6h4z" fill="#000" stroke="#fff" />
        </g>
      </svg>
    </main>
  );
}

export default function App() {
  return (
    <div className="h-screen flex flex-col text-[11px] leading-[14px] text-black font-['DejaVu_Sans_Condensed','DejaVu_Sans',sans-serif] bg-linear-to-r from-[#d6d2ca] to-white border-r-2 border-b-2 border-[#404040] overflow-hidden">
      <div className="h-1 shrink-0 bg-[#d4d0c8] border-b-2 border-[#d4d0c8] flex flex-col justify-end">
        <span className="h-px bg-white" />
      </div>
      <div className="flex-1 min-h-0 flex flex-col border-l-4 border-r-2 border-b-2 border-[#d4d0c8]">
        <header className="h-[18px] shrink-0 flex items-center px-0.5 bg-linear-to-r from-[#0a246a] to-[#a6caf0]">
          <Icon name="logo" className="w-4 h-4" />
          <h1 className="flex-1 pl-px font-bold text-white whitespace-nowrap">КОМПАС-3D V13 - [Деталь БЕЗ ИМЕНИ1]</h1>
          {['minimize', 'maximize', 'close'].map(n => (
            <button
              key={n}
              type="button"
              aria-label={n}
              className={clsx('w-4 h-3.5 bg-[#d4d0c8] border border-white border-r-[#404040] border-b-[#404040] flex items-center justify-center', n === 'close' && 'ml-0.5')}
            >
              <Icon name={n} className="w-3.5 h-3.5" />
            </button>
          ))}
        </header>
        <nav className="h-[26px] shrink-0 flex items-center">
          <Grip />
          <Icon name="nut" className="w-4 h-4" />
          <div className="flex-1 flex gap-3.5 pl-[7px]">
            {MENU.map(([a, key, b]) => (
              <button key={a + key + b} type="button">
                {a}<u>{key}</u>{b}
              </button>
            ))}
          </div>
          <div className="flex items-center pt-1.5">
            <button type="button" aria-label="Свернуть"><Icon name="minimize" className="w-4 h-4" /></button>
            <button type="button" aria-label="Восстановить"><Icon name="restore" className="w-4 h-4" /></button>
            <button type="button" aria-label="Закрыть" className="-mr-px"><Icon name="close" className="w-4 h-4" /></button>
          </div>
        </nav>

        <div className="flex shrink-0 gap-px">
          <Toolbar label="Стандартная">
            <Grip />
            <Tool icon="new" label="Создать" />
            <Arrow />
            <Tool icon="open" label="Открыть" />
            <Tool icon="save" label="Сохранить" />
            <Sep />
            <Tool icon="print" label="Печать" />
            <Sep />
            <Tool icon="preview" label="Просмотр" />
            <Arrow />
            <Tool icon="pages" label="Вставить" />
            <Arrow />
            <Sep />
            <Tool icon="cut" label="Вырезать" />
            <Tool icon="copy" label="Копировать" />
            <Tool icon="paste" label="Вставить из буфера" />
            <Sep />
            <Tool icon="brush" label="Свойства кисти" />
            <Tool icon="props" label="Свойства" />
            <Sep />
            <Tool icon="undo" label="Отменить" />
            <Tool icon="redo" label="Повторить" />
            <Sep />
            <Tool icon="cabinet" label="Менеджер библиотек" />
            <Tool icon="scroll" label="Менеджер документа" />
            <Tool icon="fx" label="Переменные" />
            <Sep />
            <Tool icon="help" label="Справка" />
            <span className="w-[3px]" />
            <EndCap />
          </Toolbar>
          <Toolbar label="Вид">
            <Grip />
            <Tool icon="zoomDoc" label="Показать все" />
            <Sep />
            <Tool icon="zoomArea" label="Увеличить рамкой" />
            <Tool icon="zoomDyn" label="Приблизить" />
            <Sep />
            <Tool icon="zoomPm" label="Масштаб" />
            <Combo value="0.8845" label="Текущий масштаб" className="w-[66px]" />
            <Sep />
            <Tool icon="move" label="Сдвинуть" />
            <Tool icon="rotate" label="Повернуть" />
            <Tool icon="axes" label="Ориентация" />
            <Arrow wide />
            <Sep />
            <Tool icon="cubeWire" label="Каркас" />
            <Tool icon="cubeHidden" label="Без невидимых линий" />
            <Tool icon="cubeThin" label="Невидимые линии тонкие" />
            <Tool icon="cubeBlue" label="Полутоновое" active />
            <Sep />
            <Tool icon="cubeEdge" label="Полутоновое с каркасом" active />
            <Sep />
            <Tool icon="wedge" label="Перспектива" />
            <Sep />
            <Tool icon="light" label="Скрыть" />
            <Arrow wide />
            <Sep />
            <Tool icon="section" label="Упрощения" active />
            <Sep />
            <Tool icon="caliper" label="Измерить" />
            <Sep />
            <Tool icon="tower" label="Перестроить" />
            <Tool icon="refresh" label="Обновить" />
            <span className="w-2" />
            <EndCap />
          </Toolbar>
        </div>

        <div className="flex shrink-0 mt-px">
          <Toolbar label="Текущее состояние">
            <Grip />
            <Tool icon="step" label="Шаг курсора" />
            <Combo value="1.0" label="Шаг" className="w-[60px]" />
            <Sep />
            <span className="w-0.5" />
            <Tool icon="layers" label="Слои" />
            <Combo value="" label="Слой" className="w-[126px]" disabled />
            <Sep />
            <Tool icon="sketch" label="Эскиз" />
            <Tool icon="sketchBox" label="Разместить эскиз" />
            <span className="w-0.5" />
            <Tool icon="magnet" label="Привязки" />
            <Arrow dim />
            <Sep />
            <Tool icon="parallel" label="Параметрический режим" />
            <span className="w-px" />
            <Sep />
            <span className="w-px" />
            <Tool icon="grid" label="Сетка" />
            <span className="pl-1.5">5.0 x 5.0</span>
            <span className="w-3.5" />
            <Arrow dim />
            <Sep />
            <Tool icon="rough" label="Очистить" />
            <Sep />
            <Tool icon="snap" label="Локальная СК" />
            <Tool icon="ortho" label="Оси" />
            <Sep />
            <Tool icon="stair" label="Ортогональное черчение" />
            <Tool icon="trace" label="Округление" active />
            <Sep />
            <Tool icon="xy" label="Координаты" />
            <input aria-label="X" disabled className="w-12 h-5 ml-px border border-[#808080] bg-[#d4d0c8]" />
            <input aria-label="Y" disabled className="w-12 h-5 ml-0.5 border border-[#808080] bg-[#d4d0c8]" />
            <span className="w-1" />
            <EndCap />
          </Toolbar>
        </div>

        <div className="flex-1 min-h-0 flex border-t border-[#808080] mr-px">
          <div role="toolbar" aria-label="Компактная панель" className="w-[25px] ml-px pt-px shrink-0 flex flex-col bg-linear-to-r from-white via-[#f4f3f0] to-[#c0bcb0] rounded-sm">
            <span className="h-2 shrink-0 flex items-center justify-center">
              <span className="w-4 border-t-2 border-dotted border-[#808080]" />
            </span>
            {GROUPS.map(([icon, label], i) => (
              <div key={icon} className="h-[17px] shrink-0 flex items-center pl-[3px]">
                <span className="h-3 border-l-2 border-dotted border-[#808080]" />
                <button
                  type="button"
                  aria-label={label}
                  className={clsx('ml-px w-[17px] h-[17px] flex items-center justify-center', i === 1 && 'border border-[#0a246a] bg-[#ced3e0]')}
                >
                  <Icon name={icon} className="w-[15px] h-[15px]" />
                </button>
              </div>
            ))}
            <HSep />
            {COMMANDS.map((name, i) => (name === '-' ? <HSep key={i} /> : <Tool key={i} icon={name} label={`Команда ${i + 1}`} />))}
            <span className="flex-1" />
            <span className="h-3 shrink-0 rounded-b-sm bg-linear-to-r from-[#808080] to-[#e0ded8] flex items-center justify-end pr-1">
              <svg viewBox="0 0 6 6" className="w-1.5 h-1.5" shapeRendering="crispEdges">
                <path d="M0.5 0v6" stroke="#000" />
                <path d="M2 0v6l4-3z" />
              </svg>
            </span>
          </div>

          <div className="flex-1 min-w-0 flex flex-col">
            <div className="flex-1 min-h-0 flex gap-[5px]">
              <ModelTree />
              <Viewport />
            </div>
            <div className="h-[66px] shrink-0 flex pt-2">
              <span className="w-1.5 shrink-0 pl-0.5 flex">
                <span className="h-[54px] border-l-2 border-dotted border-[#808080]" />
              </span>
              <div className="flex-1 flex flex-col mr-[5px]">
                <div className="h-[35px] border border-[#808080] border-b-black bg-white p-[3px]">
                  <div className="h-full bg-linear-to-b from-[#fafafa] to-[#dcdad6]" />
                </div>
                <div className="flex-1 bg-linear-to-b from-white to-[#c8c4b8]" />
              </div>
            </div>
          </div>
        </div>

        <footer className="h-[21px] shrink-0 flex items-end gap-0.5 pt-1 pl-1">
          <p className="flex-1 h-[17px] pl-px pt-px border border-[#808080] whitespace-nowrap overflow-hidden">
            Щелкните левой кнопкой мыши на объекте для его выделения (вместе с Ctrl - добавить к выделенным)
          </p>
          <span className="w-[84px] h-[17px] border border-[#808080]" />
          <svg viewBox="0 0 14 14" className="w-3.5 h-3.5" stroke="#808080">
            <path d="M4 14L14 4M8 14l6-6M12 14l2-2" />
          </svg>
        </footer>
      </div>
    </div>
  );
}
